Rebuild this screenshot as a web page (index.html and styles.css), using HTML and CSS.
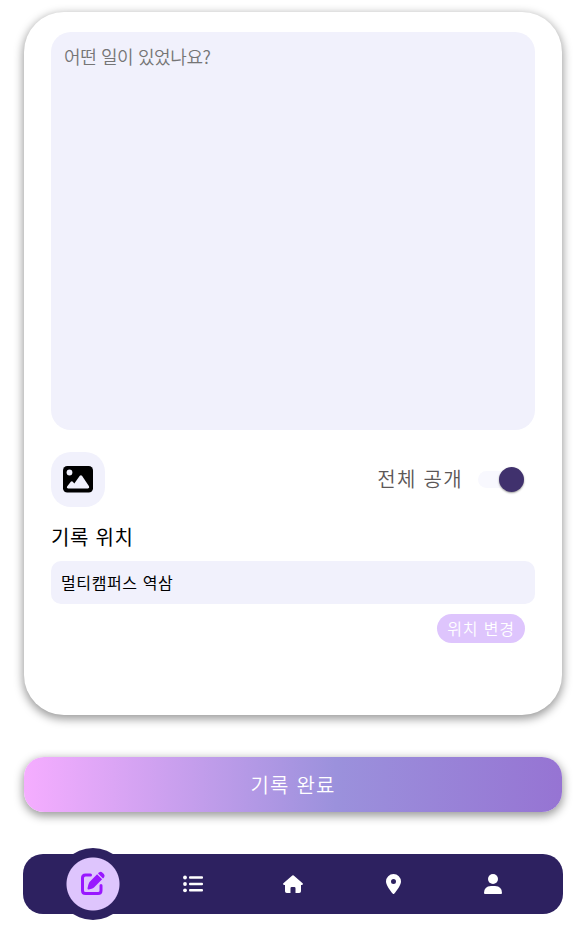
FILE: index.html
```html
<!DOCTYPE html>
<html lang="ko">
<head>
<meta charset="utf-8">
<title>기록</title>
<link rel="stylesheet" href="styles.css">
</head>
<body>
<main class="page">
  <section class="card">
    <div class="entry"><span class="placeholder">어떤 일이 있었나요?</span></div>
    <div class="options">
      <div class="photo">
        <svg width="30" height="27" viewBox="0 0 30 27"><rect width="30" height="26.5" rx="4.3"/><circle cx="6.5" cy="6.5" r="2.9" class="cut"/><path class="cut" d="M5 22.5Q3.2 22.2 4.1 20.5L7.8 15.8Q8.8 14.7 9.8 15.8L11.3 17.5L16.8 9.8Q17.9 8.6 19 9.8L26 20.3Q26.8 22.1 25 22.5Z"/></svg>
      </div>
      <div class="visibility">
        <span class="visibility-label">전체 공개</span>
        <span class="switch"><span class="knob"></span></span>
      </div>
    </div>
    <h2 class="heading"><span>기록 위치</span></h2>
    <div class="place"><span>멀티캠퍼스 역삼</span></div>
    <div class="change"><span>위치 변경</span></div>
  </section>
  <div class="submit"><span>기록 완료</span></div>
  <nav class="nav">
    <div class="item"><div class="active">
      <svg width="26" height="26" viewBox="0 0 26 26"><path d="M10.5 4H5.5Q2.5 4 2.5 7V19.5Q2.5 22.5 5.5 22.5H18Q21 22.5 21 19.5V14.5" fill="none" stroke="#9917ff" stroke-width="3" stroke-linecap="round"/><path d="M17.1 3.3L22.1 8.3L14 16.4Q13 17.4 11.6 17.8L8.8 18.5Q7.4 18.7 7.5 17.2L8.2 14.2Q8.5 12.7 9.5 11Z" fill="#9917ff"/><path d="M18 2.4L19 1.4Q20.8.2 22.5 1.7L23.9 3.1Q25.3 4.9 24 6.4L23 7.4Z" fill="#9917ff"/></svg>
    </div></div>
    <div class="item"><svg width="20" height="18" viewBox="0 0 20 18"><g fill="#fff"><circle cx="2" cy="2.5" r="1.9"/><circle cx="2" cy="9" r="1.9"/><circle cx="2" cy="15.3" r="1.9"/><rect x="6" y="1.3" width="14" height="2.5" rx="1"/><rect x="6" y="7.7" width="14" height="2.5" rx="1"/><rect x="6" y="14" width="14" height="2.5" rx="1"/></g></svg></div>
    <div class="item"><svg width="20" height="18" viewBox="0 0 20 18"><path fill="#fff" d="M9.3.4Q10 0 10.7.4L19.6 8.3Q20.4 9.2 19.1 10H18V16.2Q18 18 16.2 18H12.5V13.2Q12.5 12 11.3 12H8.7Q7.5 12 7.5 13.2V18H3.8Q2 18 2 16.2V10H.9Q-.4 9.2.4 8.3Z"/></svg></div>
    <div class="item"><svg width="15" height="20" viewBox="0 0 15 20"><path fill="#fff" fill-rule="evenodd" d="M7.5 0A7.5 7.5 0 0 0 0 7.5C0 11 4.5 17 6.6 19.6Q7.5 20.5 8.4 19.6C10.5 17 15 11 15 7.5A7.5 7.5 0 0 0 7.5 0ZM7.5 5A2.5 2.5 0 1 1 7.5 10A2.5 2.5 0 0 1 7.5 5Z"/></svg></div>
    <div class="item"><svg width="18" height="20" viewBox="0 0 18 20"><g fill="#fff"><circle cx="9" cy="5" r="5"/><path d="M7 12H11Q18 12.3 18 19Q18 20 17 20H1Q0 20 0 19Q0 12.3 7 12Z"/></g></svg></div>
  </nav>
</main>
</body>
</html>
```
FILE: styles.css
```css
* { box-sizing: border-box; }
body {
  margin: 0;
  background: #fff;
  font-family: "Noto Sans CJK KR", sans-serif;
  font-weight: 350;
  color: #000;
}
svg { display: block; }
span { white-space: nowrap; }
.page {
  display: flex;
  flex-direction: column;
  height: 925px;
  overflow: hidden;
  padding: 12px 16px 0 23px;
}
.card {
  height: 703px;
  margin: 0 1px;
  padding: 20px 27px 0;
  border-radius: 40px;
  background: #fff;
  box-shadow: 0 3px 10px 1px rgba(0, 0, 0, .4);
}
.entry {
  height: 398px;
  padding: 12px 13px;
  border-radius: 20px;
  background: #f1f1fc;
  color: #757575;
  font-size: 18px;
  line-height: 24px;
  letter-spacing: -.4px;
}
.options {
  display: flex;
  justify-content: space-between;
  align-items: center;
  height: 55px;
  margin-top: 22px;
}
.photo {
  display: grid;
  place-items: center;
  width: 54px;
  height: 55px;
  border-radius: 20px;
  background: #f1f1fc;
}
.cut { fill: #f1f1fc; }
.visibility {
  display: flex;
  align-items: center;
  gap: 15px;
  margin-right: 11px;
}
.visibility-label {
  color: #5c5757;
  font-size: 20px;
  line-height: 26px;
  padding-bottom: 2px;
  letter-spacing: 1.3px;
}
.switch {
  display: flex;
  justify-content: flex-end;
  align-items: center;
  width: 46px;
  height: 17px;
  border-radius: 9px;
  background: #f8f8fe;
}
.knob {
  width: 25px;
  height: 25px;
  flex: none;
  border-radius: 50%;
  background: #40316d;
  box-shadow: 0 1px 2px rgba(0, 0, 0, .4);
}
.heading {
  height: 30px;
  margin: 15px 0 9px;
  font-size: 20px;
  font-weight: 400;
  line-height: 30px;
  letter-spacing: .7px;
}
.place {
  height: 43px;
  padding: 0 10px;
  border-radius: 10px;
  background: #f1f1fc;
  font-size: 16px;
  font-weight: 400;
  line-height: 43px;
  letter-spacing: .6px;
}
.change {
  display: grid;
  place-items: center;
  width: 88px;
  height: 29px;
  margin: 10px 10px 0 auto;
  border-radius: 15px;
  background: #dec5fd;
  color: #fff;
  font-size: 16px;
  line-height: 29px;
  letter-spacing: .8px;
}
.submit {
  display: grid;
  place-items: center;
  height: 55px;
  margin: 42px 1px;
  border-radius: 20px;
  background: linear-gradient(90deg, #f5adff, #9b91dc 58%, #9674d3);
  box-shadow: 0 3px 10px 1px rgba(0, 0, 0, .4);
  color: #fff;
  font-size: 20px;
  line-height: 55px;
  letter-spacing: 1.2px;
}
.nav {
  display: flex;
  justify-content: center;
  align-items: center;
  height: 60px;
  border-radius: 20px;
  background: #2d2160;
}
.item {
  display: grid;
  place-items: center;
  width: 100px;
}
.active {
  display: grid;
  place-items: center;
  width: 72px;
  height: 72px;
  background: radial-gradient(circle, #dec5fd 26px, #2d2160 27px);
  border-radius: 50%;
}
```
